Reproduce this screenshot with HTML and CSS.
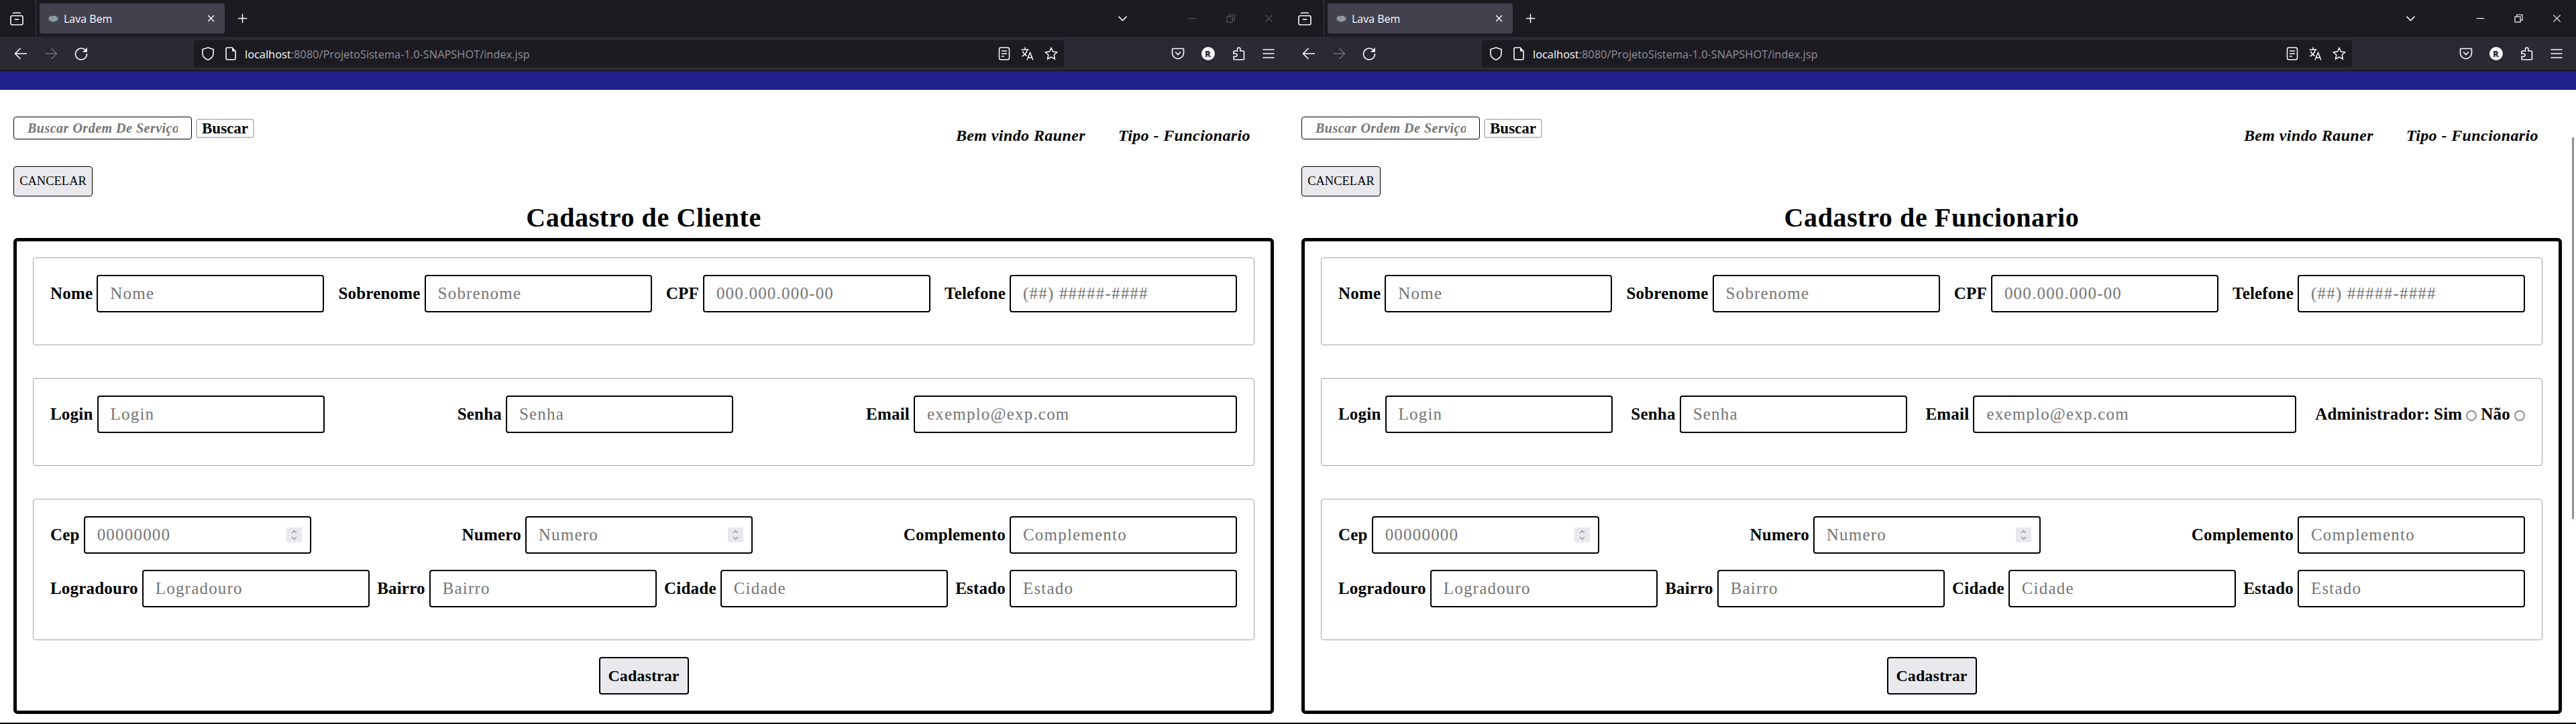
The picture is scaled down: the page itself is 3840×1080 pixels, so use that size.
FILE: index.html
```html
<!DOCTYPE html>
<html lang="pt-BR">
<head>
    <meta charset="UTF-8">
    <title>Lava Bem</title>
    <link rel="stylesheet" href="styles.css">
</head>
<body>

    <svg class="icon-defs" xmlns="http://www.w3.org/2000/svg">
        <symbol id="i-view" viewBox="0 0 20 20"><path d="M4 1.5c2-.6 10-.6 12 0"/><rect x="1" y="5.5" width="18" height="13.5" rx="2"/><path d="M7 11h6"/></symbol>
        <symbol id="i-close" viewBox="0 0 20 20"><path d="M2 2l16 16M18 2L2 18"/></symbol>
        <symbol id="i-plus" viewBox="0 0 20 20"><path d="M10 1v18M1 10h18"/></symbol>
        <symbol id="i-chevron" viewBox="0 0 20 20"><path d="M2 6l8 8 8-8"/></symbol>
        <symbol id="i-min" viewBox="0 0 20 20"><path d="M1 10h18"/></symbol>
        <symbol id="i-restore" viewBox="0 0 20 20"><rect x="1.5" y="6" width="12.5" height="12.5"/><path d="M6 6V1.5h12.500V14H14"/></symbol>
        <symbol id="i-back" viewBox="0 0 20 20"><path d="M19 10H2M9.500 2l-8 8 8 8"/></symbol>
        <symbol id="i-forward" viewBox="0 0 20 20"><path d="M1 10h17M10.500 2l8 8-8 8"/></symbol>
        <symbol id="i-reload" viewBox="0 0 20 20"><path d="M15.500 4A8.500 8.500 0 1 0 18.500 10"/><path class="solid" d="M18.800 1v6.800H12z"/></symbol>
        <symbol id="i-shield" viewBox="0 0 20 20"><path d="M10 1l8 2.500V10c0 4.500-3.500 7.500-8 9.500-4.500-2-8-5-8-9.500V3.500z"/></symbol>
        <symbol id="i-doc" viewBox="0 0 20 20"><path d="M5 1h7l5 5.500V17a2 2 0 0 1-2 2H5a2 2 0 0 1-2-2V3a2 2 0 0 1 2-2z"/><path class="solid" d="M12 1l5 5.500h-5z"/></symbol>
        <symbol id="i-reader" viewBox="0 0 20 20"><rect x="2.500" y="1" width="15" height="18" rx="2.500"/><path d="M6 6h8M6 10h8M6 14h4"/></symbol>
        <symbol id="i-translate" viewBox="0 0 20 20"><path d="M.5 4h11M6 .5V4M9.500 4C8.500 8.500 5.500 12 1.500 14M2.500 6.500c1 3 3.500 5.500 6 7M9 19.500L13.500 8.500 18 19.500M10.500 16h6"/></symbol>
        <symbol id="i-star" viewBox="0 0 20 20"><path d="M10 1.500l2.600 5.600 6.100.7-4.500 4.200 1.200 6L10 15l-5.400 3 1.200-6-4.500-4.200 6.100-.7z"/></symbol>
        <symbol id="i-pocket" viewBox="0 0 20 20"><path d="M2.500 2.500h15a1 1 0 0 1 1 1V9a8.500 8.500 0 0 1-17 0V3.500a1 1 0 0 1 1-1z"/><path d="M6 7.500l4 4 4-4"/></symbol>
        <symbol id="i-puzzle" viewBox="0 0 20 20"><path d="M10.500 1c1.500 0 2.500 1 2.500 2.500V6h4a1.500 1.500 0 0 1 1.500 1.500V18a1 1 0 0 1-1 1H4a1 1 0 0 1-1-1v-3.500h2.500c1.500 0 2.500-1 2.500-2.500s-1-2-2.500-2H3V7a1 1 0 0 1 1-1h4.500V3.500C8.500 2 9 1 10.500 1z"/></symbol>
        <symbol id="i-menu" viewBox="0 0 20 20"><path d="M1.500 4h17M1.500 10h17M1.500 16h17"/></symbol>
        <symbol id="i-spin" viewBox="0 0 23 22"><path d="M8 8l3.500-3.500L15 8M8 14l3.500 3.500L15 14"/></symbol>
    </svg>

    <div class="window window-blur">
        <div class="tabstrip">
            <div class="view-btn"><svg class="icon icon-view"><use href="#i-view"/></svg></div>
            <div class="tab">
                <svg class="favicon" viewBox="0 0 15 10"><ellipse cx="7.500" cy="5" rx="7.500" ry="4.500" fill="#7f8b96"/><path d="M2 3h3M7 2h4M4 6h2M8 5h4M6 8h3" stroke="#c5ced6" fill="none"/></svg>
                <span class="tab-title">Lava Bem</span>
                <svg class="icon icon-tabclose"><use href="#i-close"/></svg>
            </div>
            <svg class="icon icon-plus"><use href="#i-plus"/></svg>
            <svg class="icon icon-chevron"><use href="#i-chevron"/></svg>
            <div class="win-controls">
                <div class="win-btn"><svg class="icon icon-win"><use href="#i-min"/></svg></div>
                <div class="win-btn"><svg class="icon icon-win"><use href="#i-restore"/></svg></div>
                <div class="win-btn"><svg class="icon icon-win"><use href="#i-close"/></svg></div>
            </div>
        </div>
        <div class="toolbar">
            <div class="nav-btns">
                <div class="tool-btn"><svg class="icon"><use href="#i-back"/></svg></div>
                <div class="tool-btn disabled"><svg class="icon"><use href="#i-forward"/></svg></div>
                <div class="tool-btn"><svg class="icon"><use href="#i-reload"/></svg></div>
            </div>
            <div class="urlbar">
                <svg class="icon icon-shield"><use href="#i-shield"/></svg>
                <svg class="icon icon-doc"><use href="#i-doc"/></svg>
                <span class="url"><span class="url-host">localhost</span>:8080/ProjetoSistema-1.0-SNAPSHOT/index.jsp</span>
                <svg class="icon icon-url first"><use href="#i-reader"/></svg>
                <svg class="icon icon-url"><use href="#i-translate"/></svg>
                <svg class="icon icon-url"><use href="#i-star"/></svg>
            </div>
            <div class="tool-right">
                <div class="tool-btn"><svg class="icon"><use href="#i-pocket"/></svg></div>
                <div class="tool-btn"><span class="avatar">R</span></div>
                <div class="tool-btn"><svg class="icon"><use href="#i-puzzle"/></svg></div>
                <div class="tool-btn"><svg class="icon"><use href="#i-menu"/></svg></div>
            </div>
        </div>

        <div class="page">
            <div class="blue-bar"></div>
            <div class="content">
                <div class="top-row">
                    <div class="search">
                        <input class="search-input" type="text" placeholder="Buscar Ordem De Serviço">
                        <button class="search-btn" type="button">Buscar</button>
                    </div>
                    <div class="welcome">
                        <span>Bem vindo Rauner</span>
                        <span>Tipo - Funcionario</span>
                    </div>
                </div>
                <button class="cancel-btn" type="button">CANCELAR</button>
                <h1 class="title">Cadastro de Cliente</h1>

                <form class="form-box">
                    <fieldset class="group">
                        <div class="row">
                            <div class="field"><label>Nome</label><input type="text" placeholder="Nome"></div>
                            <div class="field"><label>Sobrenome</label><input type="text" placeholder="Sobrenome"></div>
                            <div class="field"><label>CPF</label><input type="text" placeholder="000.000.000-00"></div>
                            <div class="field"><label>Telefone</label><input type="text" placeholder="(##) #####-####"></div>
                        </div>
                    </fieldset>
                    <fieldset class="group">
                        <div class="row">
                            <div class="field"><label>Login</label><input type="text" placeholder="Login"></div>
                            <div class="field"><label>Senha</label><input type="text" placeholder="Senha"></div>
                            <div class="field"><label>Email</label><input class="wide" type="text" placeholder="exemplo@exp.com"></div>
                        </div>
                    </fieldset>
                    <fieldset class="group">
                        <div class="row">
                            <div class="field"><label>Cep</label><div class="num-field"><input type="text" placeholder="00000000"><svg class="spin"><use href="#i-spin"/></svg></div></div>
                            <div class="field"><label>Numero</label><div class="num-field"><input type="text" placeholder="Numero"><svg class="spin"><use href="#i-spin"/></svg></div></div>
                            <div class="field"><label>Complemento</label><input type="text" placeholder="Complemento"></div>
                        </div>
                        <div class="row">
                            <div class="field"><label>Logradouro</label><input type="text" placeholder="Logradouro"></div>
                            <div class="field"><label>Bairro</label><input type="text" placeholder="Bairro"></div>
                            <div class="field"><label>Cidade</label><input type="text" placeholder="Cidade"></div>
                            <div class="field"><label>Estado</label><input type="text" placeholder="Estado"></div>
                        </div>
                    </fieldset>
                    <button class="submit-btn" type="button">Cadastrar</button>
                </form>
            </div>
        </div>
    </div>

    <div class="window">
        <div class="tabstrip">
            <div class="view-btn"><svg class="icon icon-view"><use href="#i-view"/></svg></div>
            <div class="tab">
                <svg class="favicon" viewBox="0 0 15 10"><ellipse cx="7.500" cy="5" rx="7.500" ry="4.500" fill="#7f8b96"/><path d="M2 3h3M7 2h4M4 6h2M8 5h4M6 8h3" stroke="#c5ced6" fill="none"/></svg>
                <span class="tab-title">Lava Bem</span>
                <svg class="icon icon-tabclose"><use href="#i-close"/></svg>
            </div>
            <svg class="icon icon-plus"><use href="#i-plus"/></svg>
            <svg class="icon icon-chevron"><use href="#i-chevron"/></svg>
            <div class="win-controls">
                <div class="win-btn"><svg class="icon icon-win"><use href="#i-min"/></svg></div>
                <div class="win-btn"><svg class="icon icon-win"><use href="#i-restore"/></svg></div>
                <div class="win-btn"><svg class="icon icon-win"><use href="#i-close"/></svg></div>
            </div>
        </div>
        <div class="toolbar">
            <div class="nav-btns">
                <div class="tool-btn"><svg class="icon"><use href="#i-back"/></svg></div>
                <div class="tool-btn disabled"><svg class="icon"><use href="#i-forward"/></svg></div>
                <div class="tool-btn"><svg class="icon"><use href="#i-reload"/></svg></div>
            </div>
            <div class="urlbar">
                <svg class="icon icon-shield"><use href="#i-shield"/></svg>
                <svg class="icon icon-doc"><use href="#i-doc"/></svg>
                <span class="url"><span class="url-host">localhost</span>:8080/ProjetoSistema-1.0-SNAPSHOT/index.jsp</span>
                <svg class="icon icon-url first"><use href="#i-reader"/></svg>
                <svg class="icon icon-url"><use href="#i-translate"/></svg>
                <svg class="icon icon-url"><use href="#i-star"/></svg>
            </div>
            <div class="tool-right">
                <div class="tool-btn"><svg class="icon"><use href="#i-pocket"/></svg></div>
                <div class="tool-btn"><span class="avatar">R</span></div>
                <div class="tool-btn"><svg class="icon"><use href="#i-puzzle"/></svg></div>
                <div class="tool-btn"><svg class="icon"><use href="#i-menu"/></svg></div>
            </div>
        </div>

        <div class="page">
            <div class="blue-bar"></div>
            <div class="content">
                <div class="top-row">
                    <div class="search">
                        <input class="search-input" type="text" placeholder="Buscar Ordem De Serviço">
                        <button class="search-btn" type="button">Buscar</button>
                    </div>
                    <div class="welcome">
                        <span>Bem vindo Rauner</span>
                        <span>Tipo - Funcionario</span>
                    </div>
                </div>
                <button class="cancel-btn" type="button">CANCELAR</button>
                <h1 class="title">Cadastro de Funcionario</h1>

                <form class="form-box">
                    <fieldset class="group">
                        <div class="row">
                            <div class="field"><label>Nome</label><input type="text" placeholder="Nome"></div>
                            <div class="field"><label>Sobrenome</label><input type="text" placeholder="Sobrenome"></div>
                            <div class="field"><label>CPF</label><input type="text" placeholder="000.000.000-00"></div>
                            <div class="field"><label>Telefone</label><input type="text" placeholder="(##) #####-####"></div>
                        </div>
                    </fieldset>
                    <fieldset class="group">
                        <div class="row">
                            <div class="field"><label>Login</label><input type="text" placeholder="Login"></div>
                            <div class="field"><label>Senha</label><input type="text" placeholder="Senha"></div>
                            <div class="field"><label>Email</label><input class="wide" type="text" placeholder="exemplo@exp.com"></div>
                            <div class="admin">
                                <span>Administrador:</span>
                                <span>Sim</span><input class="radio" type="radio" name="admin">
                                <span>Não</span><input class="radio" type="radio" name="admin">
                            </div>
                        </div>
                    </fieldset>
                    <fieldset class="group">
                        <div class="row">
                            <div class="field"><label>Cep</label><div class="num-field"><input type="text" placeholder="00000000"><svg class="spin"><use href="#i-spin"/></svg></div></div>
                            <div class="field"><label>Numero</label><div class="num-field"><input type="text" placeholder="Numero"><svg class="spin"><use href="#i-spin"/></svg></div></div>
                            <div class="field"><label>Complemento</label><input type="text" placeholder="Complemento"></div>
                        </div>
                        <div class="row">
                            <div class="field"><label>Logradouro</label><input type="text" placeholder="Logradouro"></div>
                            <div class="field"><label>Bairro</label><input type="text" placeholder="Bairro"></div>
                            <div class="field"><label>Cidade</label><input type="text" placeholder="Cidade"></div>
                            <div class="field"><label>Estado</label><input type="text" placeholder="Estado"></div>
                        </div>
                    </fieldset>
                    <button class="submit-btn" type="button">Cadastrar</button>
                </form>
            </div>
            <div class="scroll-thumb"></div>
        </div>
    </div>

</body>
</html>
```
FILE: styles.css
```css
* {
    box-sizing: border-box;
}

body {
    margin: 0;
    background-color: #000;
    display: flex;
    width: 3840px;
    height: 1080px;
    overflow: hidden;
    font-family: "Liberation Serif", serif;
}

.icon-defs {
    position: absolute;
    width: 0;
    height: 0;
}

.window {
    width: 1920px;
    height: 1078px;
    display: flex;
    flex-direction: column;
    background-color: #fff;
}

/* browser chrome */
.icon {
    width: 20px;
    height: 20px;
    flex: none;
    fill: none;
    stroke: #fbfbfe;
    stroke-width: 1.6;
    color: #fbfbfe;
}

.icon .solid,
.solid {
    fill: #fbfbfe;
    stroke: none;
}

.tabstrip {
    height: 55px;
    background-color: #1c1b22;
    display: flex;
    align-items: center;
    font-family: "Open Sans", sans-serif;
}

.view-btn {
    width: 54px;
    height: 55px;
    padding-left: 15px;
    display: flex;
    align-items: center;
    border-right: 1px solid #3a3944;
}

.tab {
    width: 276px;
    height: 45px;
    margin-left: 5px;
    padding-left: 13px;
    background-color: #42414d;
    border-radius: 4px;
    display: flex;
    align-items: center;
}

.favicon {
    width: 15px;
    height: 10px;
}

.tab-title {
    margin-left: 8px;
    color: #fbfbfe;
    font-size: 16px;
    flex: 1;
}

.icon-tabclose {
    width: 11px;
    height: 11px;
    margin-right: 15px;
    stroke-width: 2.6;
}

.icon-plus {
    width: 15px;
    height: 15px;
    margin-left: 19px;
    stroke-width: 2;
}

.icon-chevron {
    width: 15px;
    height: 15px;
    margin-left: auto;
    margin-right: 68px;
    stroke-width: 2.2;
    stroke: #fbfbfe;
}

.win-controls {
    display: flex;
}

.win-btn {
    width: 57px;
    height: 55px;
    display: flex;
    align-items: center;
    justify-content: center;
}

.icon-win {
    width: 13px;
    height: 13px;
    stroke-width: 1.8;
}

.window-blur .icon-win {
    stroke: #5b5a63;
}

.toolbar {
    height: 51px;
    background-color: #2b2a33;
    border-bottom: 1px solid #0c0c0d;
    display: flex;
    align-items: center;
    padding: 0 7px 0 8px;
}

.nav-btns,
.tool-right {
    display: flex;
    flex: none;
}

.tool-btn {
    width: 45px;
    display: flex;
    justify-content: center;
    align-items: center;
}

.tool-btn.disabled .icon {
    stroke: #6e6d75;
}

.urlbar {
    flex: 1;
    height: 40px;
    margin-left: 146px;
    margin-right: 147px;
    padding: 0 9px 0 11px;
    background-color: #1c1b22;
    border-radius: 4px;
    display: flex;
    align-items: center;
}

.icon-doc {
    margin-left: 14px;
}

.url {
    margin-left: 11px;
    flex: 1;
    color: #8f8f96;
    font-family: "Open Sans", sans-serif;
    font-size: 16.4px;
    white-space: nowrap;
}

.url-host {
    color: #fbfbfe;
}

.icon-url {
    margin-left: 15px;
    stroke-width: 1.5;
}

.avatar {
    width: 20px;
    height: 20px;
    border-radius: 50%;
    background-color: #fbfbfe;
    color: #2b2a33;
    font-family: "Open Sans", sans-serif;
    font-size: 13px;
    font-weight: 800;
    line-height: 20px;
    text-align: center;
}

/* page */
.page {
    position: relative;
    flex: 1;
}

.blue-bar {
    height: 28px;
    background-color: #20208c;
}

.content {
    padding: 40px 21px 0 20px;
}

.top-row {
    height: 74px;
    display: flex;
    justify-content: space-between;
    align-items: flex-start;
}

.search {
    display: flex;
    align-items: center;
    gap: 6px;
}

.search-input {
    width: 266px;
    height: 34px;
    padding: 0 20px;
    border: 1px solid #000;
    border-radius: 4px;
    font-family: inherit;
    font-size: 20px;
    font-style: italic;
    font-weight: bold;
    letter-spacing: 0.5px;
}

.search-btn {
    width: 87px;
    height: 29px;
    padding: 0;
    background-color: #fff;
    border: 2px solid #c4c4c4;
    border-radius: 4px;
    color: #000;
    font-family: inherit;
    font-size: 23px;
    font-weight: bold;
}

.welcome {
    margin-top: 15px;
    margin-right: 35px;
    display: flex;
    gap: 49px;
    font-size: 24px;
    font-style: italic;
    font-weight: bold;
    letter-spacing: 0.4px;
}

.cancel-btn {
    display: block;
    width: 118px;
    height: 45px;
    padding: 0;
    background-color: #e9e9ed;
    border: 1px solid #000;
    border-radius: 4px;
    color: #000;
    font-family: inherit;
    font-size: 18.5px;
}

.title {
    margin: 0;
    height: 62px;
    text-align: center;
    font-size: 40px;
    letter-spacing: 0.6px;
    line-height: 64px;
}

.form-box {
    height: 710px;
    padding: 24px;
    border: 5px solid #000;
    border-radius: 6px;
    display: flex;
    flex-direction: column;
}

.group {
    margin: 0 0 49px;
    padding: 25px 25px 24px;
    min-width: 0;
    border: 1px solid #a3a3a3;
    border-radius: 4px;
}

.group:last-of-type {
    margin-bottom: 25px;
}

.row {
    display: flex;
    justify-content: space-between;
    align-items: center;
    margin-bottom: 24px;
}

.field {
    display: flex;
    align-items: center;
    gap: 6px;
}

.field label,
.admin {
    font-size: 25px;
    font-weight: bold;
    letter-spacing: 0.2px;
    color: #000;
}

.field input {
    width: 339px;
    height: 56px;
    padding: 0 18px;
    border: 2px solid #000;
    border-radius: 4px;
    font-family: inherit;
    font-size: 25px;
    letter-spacing: 1.2px;
}

.field input.wide {
    width: 482px;
}

input::placeholder {
    color: #757575;
    opacity: 1;
}

.num-field {
    position: relative;
}

.spin {
    position: absolute;
    top: 17px;
    right: 14px;
    width: 23px;
    height: 22px;
    background-color: #e9e9ed;
    fill: none;
    stroke: #8c8c92;
    stroke-width: 1.2;
}

.admin {
    display: flex;
    align-items: center;
    gap: 6px;
}

.radio {
    appearance: none;
    width: 16px;
    height: 16px;
    margin: 3px 0 0;
    border: 2px solid #8f8f9d;
    border-radius: 50%;
    background-color: #fff;
}

.submit-btn {
    align-self: center;
    width: 134px;
    height: 56px;
    padding: 0;
    background-color: #e9e9ed;
    border: 2px solid #000;
    border-radius: 4px;
    color: #000;
    font-family: inherit;
    font-size: 24px;
    font-weight: bold;
    letter-spacing: 0.1px;
}

.scroll-thumb {
    position: absolute;
    top: 99px;
    right: 3px;
    width: 3px;
    height: 569px;
    background-color: #8f8f9d;
}
```
